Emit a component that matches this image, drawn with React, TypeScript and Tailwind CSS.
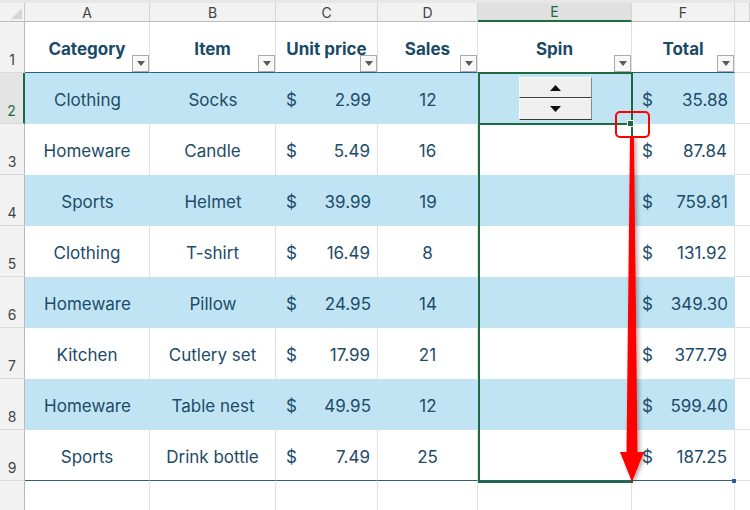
import React from "react"

type Row = { cat: string; item: string; price: string; sales: number; total: string }

const rows: Row[] = [
  { cat: "Clothing", item: "Socks", price: "2.99", sales: 12, total: "35.88" },
  { cat: "Homeware", item: "Candle", price: "5.49", sales: 16, total: "87.84" },
  { cat: "Sports", item: "Helmet", price: "39.99", sales: 19, total: "759.81" },
  { cat: "Clothing", item: "T-shirt", price: "16.49", sales: 8, total: "131.92" },
  { cat: "Homeware", item: "Pillow", price: "24.95", sales: 14, total: "349.30" },
  { cat: "Kitchen", item: "Cutlery set", price: "17.99", sales: 21, total: "377.79" },
  { cat: "Homeware", item: "Table nest", price: "49.95", sales: 12, total: "599.40" },
  { cat: "Sports", item: "Drink bottle", price: "7.49", sales: 25, total: "187.25" },
]

const letters = ["A", "B", "C", "D", "E", "F", ""]
const headers = ["Category", "Item", "Unit price", "Sales", "Spin", "Total"]

function Filter() {
  return (
    <span className="absolute right-0 bottom-0 flex h-[17px] w-[17px] items-center justify-center border border-[#ababab] bg-[#f8f8f8]">
      <svg width="8" height="5" viewBox="0 0 8 5">
        <path d="M0 0h8L4 5z" fill="#595959" />
      </svg>
    </span>
  )
}

function Spinner() {
  return (
    <div className="flex w-[73px] flex-col">
      <div className="flex h-[21px] items-center justify-center border border-t-[#fbfbfb] border-l-[#fbfbfb] border-r-[#8a8a8a] border-b-[#3a3a3a] bg-[#efefef]">
        <svg width="11" height="6" viewBox="0 0 11 6">
          <path d="M0 6h11L5.5 0z" fill="#111" />
        </svg>
      </div>
      <div className="flex h-[22px] items-center justify-center border border-t-[#fbfbfb] border-l-[#fbfbfb] border-r-[#8a8a8a] border-b-[#3a3a3a] bg-[#efefef]">
        <svg width="11" height="6" viewBox="0 0 11 6">
          <path d="M0 0h11L5.5 6z" fill="#111" />
        </svg>
      </div>
    </div>
  )
}

export default function App() {
  return (
    <div className="relative h-[510px] w-[750px] overflow-hidden bg-white font-['Inter',sans-serif]">
      <div className="h-[3px] bg-[#e9e6e6]" />
      <div className="grid h-[507px] grid-cols-[25px_125px_126px_102px_100px_154px_103px_1fr] grid-rows-[19px_repeat(9,51px)_1fr]">
        {/* column letters */}
        <div className="relative border-r border-b border-r-[#c8c8c8] border-b-[#bdbdbd] bg-[#f2f2f2]">
          <svg className="absolute top-[5px] left-[11px]" width="11" height="11" viewBox="0 0 11 11">
            <path d="M11 0v11H0z" fill="#d6d6d6" />
          </svg>
        </div>
        {letters.map((l, i) =>
          l === "E" ? (
            <div key={i} className="flex items-center justify-center border-r border-b-2 border-r-[#d4d4d4] border-b-[#1e6b40] bg-[#e0e0e0] text-[14px] text-[#1e6b40]">
              {l}
            </div>
          ) : (
            <div key={i} className="flex items-center justify-center border-r border-b border-r-[#d4d4d4] border-b-[#bdbdbd] bg-[#f2f2f2] text-[14px] text-[#444]">
              {l}
            </div>
          )
        )}

        {/* row 1: table header */}
        <div className="flex items-end justify-center border-r border-b border-r-[#b9b9b9] border-b-[#dadada] bg-[#f2f2f2] pb-[2px] text-[14px] text-[#444]">1</div>
        {headers.map((h) => (
          <div key={h} className="relative flex items-center justify-center border-r border-b border-r-[#e1e1e1] border-b-[#2b5f7c] pt-[5px] text-[17px] font-bold text-[#1b4a67]">
            {h}
            <Filter />
          </div>
        ))}
        <div className="border-b border-[#e1e1e1]" />

        {/* data rows */}
        {rows.map((r, i) => {
          const blue = i % 2 === 0
          const last = i === rows.length - 1
          const n = i + 2
          const cell = blue
            ? "flex items-center justify-center bg-[#c0e4f3] pt-[5px] text-[17px] text-[#1d4b68]"
            : "flex items-center justify-center border-r border-[#e1e1e1] bg-white pt-[5px] text-[17px] text-[#1d4b68]"
          const edge = last ? " border-b border-b-[#2b5f7c]" : ""
          const money = blue
            ? "flex items-center justify-between bg-[#c0e4f3] pt-[5px] pr-[7px] pl-[10px] text-[17px] text-[#1d4b68]"
            : "flex items-center justify-between border-r border-[#e1e1e1] bg-white pt-[5px] pr-[7px] pl-[10px] text-[17px] text-[#1d4b68]"
          const spin = blue
            ? "flex items-center justify-center bg-[#c0e4f3]"
            : "border-r border-[#e1e1e1] bg-white"
          return (
            <React.Fragment key={n}>
              {n === 2 ? (
                <div className="flex items-end justify-center border-r-2 border-b border-r-[#1e6b40] border-b-[#dadada] bg-[#e4e4e4] pb-[2px] text-[14px] text-[#1e6b40]">
                  {n}
                </div>
              ) : (
                <div className="flex items-end justify-center border-r border-b border-r-[#b9b9b9] border-b-[#dadada] bg-[#f2f2f2] pb-[2px] text-[14px] text-[#444]">
                  {n}
                </div>
              )}
              <div className={cell + edge}>{r.cat}</div>
              <div className={cell + edge}>{r.item}</div>
              <div className={money + edge}>
                <span>$</span>
                <span>{r.price}</span>
              </div>
              <div className={cell + edge}>{r.sales}</div>
              <div className={spin + edge}>{n === 2 ? <Spinner /> : null}</div>
              <div className={money + edge}>
                <span>$</span>
                <span>{r.total}</span>
              </div>
              <div className="border-b border-[#e1e1e1]" />
            </React.Fragment>
          )
        })}

        {/* row 10 */}
        <div className="border-r border-r-[#b9b9b9] bg-[#f2f2f2]" />
        {[0, 1, 2, 3, 4, 5].map((k) => (
          <div key={k} className="border-r border-[#e1e1e1]" />
        ))}
        <div />
      </div>

      {/* selection range E2:E9 */}
      <div className="pointer-events-none absolute top-[72px] left-[478px] h-[411px] w-[155px] border-2 border-[#1e6b40]" />
      <div className="pointer-events-none absolute top-[123px] left-[478px] h-[2px] w-[150px] bg-[#1e6b40]" />
      <div className="pointer-events-none absolute top-[120px] left-[627px] h-[7px] w-[7px] border border-white bg-[#1e6b40]" />
      <div className="pointer-events-none absolute top-[479px] left-[732px] h-[4px] w-[4px] bg-[#2e5a9a]" />

      {/* annotation */}
      <div className="pointer-events-none absolute top-[111px] left-[615px] h-[27px] w-[35px] rounded-[5px] border-2 border-[#ff0000]" />
      <svg className="pointer-events-none absolute top-0 left-0" width="750" height="510" viewBox="0 0 750 510">
        <defs>
          <filter id="sh" x="-50%" y="-10%" width="200%" height="120%">
            <feDropShadow dx="2" dy="1" stdDeviation="2" floodColor="#000" floodOpacity="0.35" />
          </filter>
        </defs>
        <g filter="url(#sh)">
          <path d="M630 137h4l3.5 316h-11z" fill="#ff0000" />
          <path d="M620 452h24l-12 30z" fill="#ff0000" />
        </g>
      </svg>
    </div>
  )
}
